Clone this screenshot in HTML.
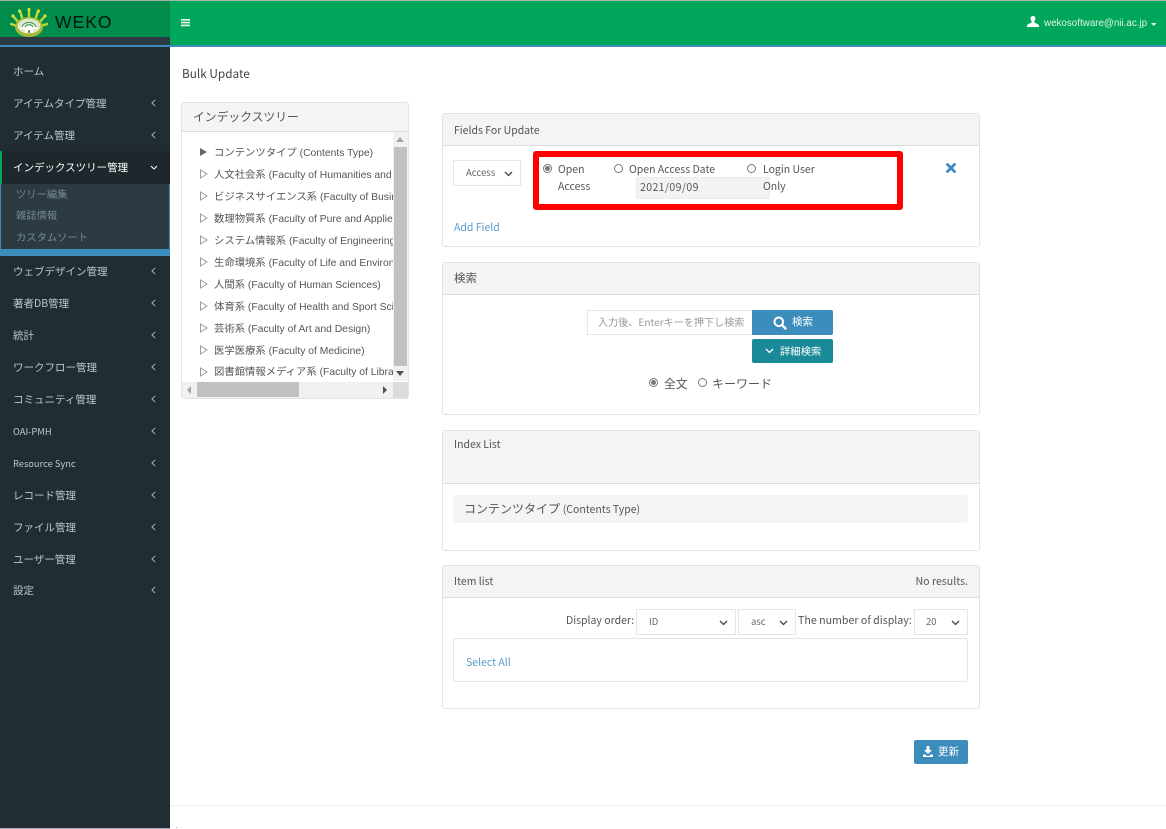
<!DOCTYPE html>
<html lang="ja"><head><meta charset="utf-8"><title>Bulk Update</title>
<style>
*{box-sizing:border-box}
html,body{margin:0;padding:0;width:1166px;height:829px;overflow:hidden;background:#fff}
body{position:relative;font-family:"Noto Sans CJK JP","Liberation Sans",sans-serif;font-size:11px;color:#444}
.a{position:absolute;white-space:nowrap;line-height:1}
.box{position:absolute;background:#fff;border:1px solid #e3e3e3;border-radius:3px;overflow:hidden}
.head{position:absolute;left:0;right:0;top:0;background:#f4f4f4;border-bottom:1px solid #ddd}
.nav{position:absolute;left:13px;color:#b8c7ce;font-size:10.5px;line-height:1;white-space:nowrap}
.chev{position:absolute;left:151px;width:5px;height:8px}
.sub{position:absolute;left:16px;color:#75888f;font-size:10.3px;line-height:1;white-space:nowrap}
.t{position:absolute;left:214px;font-family:"Liberation Sans","Noto Sans CJK JP",sans-serif;font-size:10.35px;color:#555;line-height:1;white-space:nowrap}
.tri{position:absolute;left:199px;width:9px;height:10px}
.sel{position:absolute;background:#fff;border:1px solid #e4e6ea;height:26px;color:#666;font-size:9.500px}
.sel svg{position:absolute;top:10px;right:7px}
.sel span{position:absolute;top:7px;line-height:1}
.radio{position:absolute;width:9px;height:9px;border:1px solid #777;border-radius:50%;background:#fff}
.radio.on:after{content:"";position:absolute;left:1px;top:1px;width:5px;height:5px;background:#777;border-radius:50%}
.l{font-size:10.500px;color:#555}
</style></head><body>

<!-- header -->
<div style="position:absolute;left:0;top:0;width:1166px;height:2px;background:#a9b4ad"></div>
<div style="position:absolute;left:170px;top:1px;width:996px;height:45px;background:#00a65a"></div>
<div style="position:absolute;left:0;top:1px;width:170px;height:36px;background:#008d4c"></div>
<div style="position:absolute;left:0;top:37px;width:170px;height:9px;background:#2c3b41"></div>
<div style="position:absolute;left:0;top:45px;width:1166px;height:2px;background:#3c8dbc"></div>
<div style="position:absolute;left:0;top:47px;width:170px;height:781px;background:#222d32"></div>

<!-- logo -->
<svg style="position:absolute;left:10px;top:7px" width="38" height="30" viewBox="0 0 38 30">
<g stroke="#c3d92e" stroke-width="2.4" stroke-linecap="round">
<path d="M19 13V3M13 14L10 4M25 14L28 4M9 16L3 9M29 16L35 9M7 19L1 17M31 19L37 17"/></g>
<g fill="#d2e23c"><circle cx="19" cy="2.5" r="1.6"/><circle cx="9.5" cy="4" r="1.6"/><circle cx="28.5" cy="4" r="1.6"/><circle cx="3" cy="9" r="1.6"/><circle cx="35" cy="9" r="1.6"/></g>
<ellipse cx="19" cy="20" rx="14" ry="10" fill="#a8b83a"/>
<ellipse cx="19" cy="19" rx="11.5" ry="7.5" fill="#dcecc8"/>
<path d="M10 22C12 14 26 14 28 22Z" fill="#fff"/>
<path d="M12 20C14 14 24 14 26 20M15 20C16 17 22 17 23 20" fill="none" stroke="#4a9a5a" stroke-width="1.2"/>
<path d="M15 26v-4h8v4z" fill="#fff"/><path d="M18 26v-3h2v3z" fill="#6a9a3a"/>
</svg>
<div class="a" style="left:55px;top:14px;font-family:'Liberation Sans',sans-serif;font-size:17.500px;letter-spacing:1px;color:#03150f">WEKO</div>

<!-- hamburger -->
<svg style="position:absolute;left:181px;top:18px" width="10" height="9"><path d="M0 1h9v1.6H0zM0 3.8h9v1.6H0zM0 6.6h9v1.6H0z" fill="#e8f6ee"/></svg>

<!-- user -->
<svg style="position:absolute;left:1027px;top:16px" width="12" height="11" viewBox="0 0 12 11"><path d="M6 0C4.2 0 3.4 1.3 3.6 3c.1 1.1.6 2 1.1 2.5v1L1 8.2C.4 8.5 0 9 0 9.600V11h12V9.600c0-.6-.4-1.100-1-1.400L7.300 6.500v-1C7.800 5 8.300 4.100 8.400 3 8.600 1.300 7.800 0 6 0z" fill="#fff"/></svg>
<div class="a" style="left:1044px;top:19px;font-family:'Liberation Sans',sans-serif;font-size:9.800px;color:#e2f5ea">wekosoftware@nii.ac.jp</div>
<svg style="position:absolute;left:1151px;top:23px" width="6" height="3"><path d="M0 0h5.500L2.750 3z" fill="#e2f5ea"/></svg>

<!-- sidebar -->
<div class="nav" style="top:67px">ホーム</div>
<div class="nav" style="top:99px">アイテムタイプ管理</div>
<div class="nav" style="top:131px">アイテム管理</div>
<div style="position:absolute;left:0;top:151px;width:170px;height:33px;background:#1e282c"></div>
<div style="position:absolute;left:0;top:151px;width:2px;height:33px;background:#00a65a"></div>
<div class="nav" style="top:163px;color:#fff">インデックスツリー管理</div>
<div style="position:absolute;left:0;top:184px;width:170px;height:65px;background:#2c3b41;border-left:1px solid #3c8dbc;border-right:1px solid #3c8dbc"></div>
<div style="position:absolute;left:0;top:249px;width:170px;height:7px;background:#3c8dbc"></div>
<div class="sub" style="top:189px">ツリー編集</div>
<div class="sub" style="top:210px">雑誌情報</div>
<div class="sub" style="top:232px">カスタムソート</div>
<div class="nav" style="top:267px">ウェブデザイン管理</div>
<div class="nav" style="top:299px">著者DB管理</div>
<div class="nav" style="top:331px">統計</div>
<div class="nav" style="top:363px">ワークフロー管理</div>
<div class="nav" style="top:395px">コミュニティ管理</div>
<div class="nav" style="top:427px;font-size:9.300px">OAI-PMH</div>
<div class="nav" style="top:459px;font-size:9.300px">Resource Sync</div>
<div class="nav" style="top:491px">レコード管理</div>
<div class="nav" style="top:523px">ファイル管理</div>
<div class="nav" style="top:555px">ユーザー管理</div>
<div class="nav" style="top:586px">設定</div>

<svg class="chev" style="top:99px" viewBox="0 0 5 8"><path d="M4 1L1 4l3 3" fill="none" stroke="#9fb0b7" stroke-width="1"/></svg>
<svg class="chev" style="top:131px" viewBox="0 0 5 8"><path d="M4 1L1 4l3 3" fill="none" stroke="#9fb0b7" stroke-width="1"/></svg>
<svg style="position:absolute;left:150px;top:165px" width="8" height="5"><path d="M1 1l3 3 3-3" fill="none" stroke="#fff" stroke-width="1"/></svg>
<svg class="chev" style="top:267px" viewBox="0 0 5 8"><path d="M4 1L1 4l3 3" fill="none" stroke="#9fb0b7" stroke-width="1"/></svg>
<svg class="chev" style="top:299px" viewBox="0 0 5 8"><path d="M4 1L1 4l3 3" fill="none" stroke="#9fb0b7" stroke-width="1"/></svg>
<svg class="chev" style="top:331px" viewBox="0 0 5 8"><path d="M4 1L1 4l3 3" fill="none" stroke="#9fb0b7" stroke-width="1"/></svg>
<svg class="chev" style="top:363px" viewBox="0 0 5 8"><path d="M4 1L1 4l3 3" fill="none" stroke="#9fb0b7" stroke-width="1"/></svg>
<svg class="chev" style="top:395px" viewBox="0 0 5 8"><path d="M4 1L1 4l3 3" fill="none" stroke="#9fb0b7" stroke-width="1"/></svg>
<svg class="chev" style="top:427px" viewBox="0 0 5 8"><path d="M4 1L1 4l3 3" fill="none" stroke="#9fb0b7" stroke-width="1"/></svg>
<svg class="chev" style="top:459px" viewBox="0 0 5 8"><path d="M4 1L1 4l3 3" fill="none" stroke="#9fb0b7" stroke-width="1"/></svg>
<svg class="chev" style="top:491px" viewBox="0 0 5 8"><path d="M4 1L1 4l3 3" fill="none" stroke="#9fb0b7" stroke-width="1"/></svg>
<svg class="chev" style="top:523px" viewBox="0 0 5 8"><path d="M4 1L1 4l3 3" fill="none" stroke="#9fb0b7" stroke-width="1"/></svg>
<svg class="chev" style="top:555px" viewBox="0 0 5 8"><path d="M4 1L1 4l3 3" fill="none" stroke="#9fb0b7" stroke-width="1"/></svg>
<svg class="chev" style="top:586px" viewBox="0 0 5 8"><path d="M4 1L1 4l3 3" fill="none" stroke="#9fb0b7" stroke-width="1"/></svg>

<!-- title -->
<div class="a" style="left:182px;top:68px;font-size:11.800px;color:#444">Bulk Update</div>

<!-- tree panel -->
<div class="box" style="left:181px;top:102px;width:228px;height:297px">
  <div class="head" style="height:29px"></div>
</div>
<div class="a" style="left:193px;top:111px;font-size:11.800px;color:#555">インデックスツリー</div>

<svg class="tri" style="top:147px"><path d="M1 1l7 4-7 4z" fill="#666"/></svg>
<svg class="tri" style="top:169px"><path d="M1.500 1l6.500 4-6.500 4z" fill="#fff" stroke="#999"/></svg>
<svg class="tri" style="top:191px"><path d="M1.500 1l6.500 4-6.500 4z" fill="#fff" stroke="#999"/></svg>
<svg class="tri" style="top:213px"><path d="M1.500 1l6.500 4-6.500 4z" fill="#fff" stroke="#999"/></svg>
<svg class="tri" style="top:235px"><path d="M1.500 1l6.500 4-6.500 4z" fill="#fff" stroke="#999"/></svg>
<svg class="tri" style="top:257px"><path d="M1.500 1l6.500 4-6.500 4z" fill="#fff" stroke="#999"/></svg>
<svg class="tri" style="top:279px"><path d="M1.500 1l6.500 4-6.500 4z" fill="#fff" stroke="#999"/></svg>
<svg class="tri" style="top:301px"><path d="M1.500 1l6.500 4-6.500 4z" fill="#fff" stroke="#999"/></svg>
<svg class="tri" style="top:323px"><path d="M1.500 1l6.500 4-6.500 4z" fill="#fff" stroke="#999"/></svg>
<svg class="tri" style="top:345px"><path d="M1.500 1l6.500 4-6.500 4z" fill="#fff" stroke="#999"/></svg>
<svg class="tri" style="top:367px"><path d="M1.500 1l6.500 4-6.500 4z" fill="#fff" stroke="#999"/></svg>

<div style="position:absolute;left:192px;top:135px;width:201px;height:246px;overflow:hidden">
<div class="t" style="left:22px;top:14px">コンテンツタイプ (Contents Type)</div>
<div class="t" style="left:22px;top:36px">人文社会系 (Faculty of Humanities and Social Sciences)</div>
<div class="t" style="left:22px;top:58px">ビジネスサイエンス系 (Faculty of Business Sciences)</div>
<div class="t" style="left:22px;top:80px">数理物質系 (Faculty of Pure and Applied Sciences)</div>
<div class="t" style="left:22px;top:102px">システム情報系 (Faculty of Engineering)</div>
<div class="t" style="left:22px;top:124px">生命環境系 (Faculty of Life and Environmental Sciences)</div>
<div class="t" style="left:22px;top:146px">人間系 (Faculty of Human Sciences)</div>
<div class="t" style="left:22px;top:168px">体育系 (Faculty of Health and Sport Sciences)</div>
<div class="t" style="left:22px;top:190px">芸術系 (Faculty of Art and Design)</div>
<div class="t" style="left:22px;top:212px">医学医療系 (Faculty of Medicine)</div>
<div class="t" style="left:22px;top:233px">図書館情報メディア系 (Faculty of Library, Information)</div>
</div>

<!-- scrollbars -->
<div style="position:absolute;left:393px;top:132px;width:15px;height:249px;background:#f1f1f1"></div>
<div style="position:absolute;left:394px;top:147px;width:13px;height:219px;background:#c1c1c1"></div>
<svg style="position:absolute;left:396px;top:137px" width="9" height="5"><path d="M0 5h8L4 0z" fill="#a3a3a3"/></svg>
<svg style="position:absolute;left:396px;top:371px" width="9" height="5"><path d="M0 0h8L4 5z" fill="#505050"/></svg>
<div style="position:absolute;left:182px;top:382px;width:211px;height:16px;background:#f1f1f1"></div>
<div style="position:absolute;left:197px;top:382px;width:102px;height:15px;background:#c1c1c1"></div>
<div style="position:absolute;left:393px;top:382px;width:15px;height:16px;background:#dcdcdc"></div>
<svg style="position:absolute;left:187px;top:386px" width="5" height="8"><path d="M4 0v8L0 4z" fill="#a3a3a3"/></svg>
<svg style="position:absolute;left:383px;top:386px" width="5" height="8"><path d="M0 0v8l4-4z" fill="#505050"/></svg>

<!-- Fields For Update -->
<div class="box" style="left:442px;top:113px;width:538px;height:134px"><div class="head" style="height:32px"></div></div>
<div class="a l" style="left:454px;top:126px">Fields For Update</div>
<div class="sel" style="left:453px;top:160px;width:68px"><span style="left:12px">Access</span><svg width="9" height="6"><path d="M1 1l3.500 3.500L8 1" fill="none" stroke="#444" stroke-width="1.300"/></svg></div>
<div style="position:absolute;left:533px;top:151px;width:370px;height:59px;border:6px solid #f00;border-radius:3px;background:#fff"></div>
<div class="radio on" style="left:543px;top:164px"></div>
<div class="a l" style="left:558px;top:165px">Open</div>
<div class="a l" style="left:558px;top:182px">Access</div>
<div class="radio" style="left:614px;top:164px"></div>
<div class="a l" style="left:629px;top:165px">Open Access Date</div>
<div style="position:absolute;left:636px;top:177px;width:134px;height:22px;background:#f3f3f3;border:1px solid #eaeaea;border-radius:2px"></div>
<div class="a" style="left:640px;top:183px;font-size:10.500px;letter-spacing:.4px;color:#555">2021/09/09</div>
<div class="radio" style="left:747px;top:164px"></div>
<div class="a l" style="left:763px;top:165px">Login User</div>
<div class="a l" style="left:763px;top:182px">Only</div>
<svg style="position:absolute;left:946px;top:163px" width="10" height="10" viewBox="0 0 10 10"><path d="M1.500 1.500l7 7M8.500 1.500l-7 7" stroke="#3c8dbc" stroke-width="2.800" stroke-linecap="round"/></svg>
<div class="a l" style="left:454px;top:223px;color:#5a9bc7">Add Field</div>

<!-- search -->
<div class="box" style="left:442px;top:262px;width:538px;height:153px"><div class="head" style="height:32px"></div></div>
<div class="a" style="left:454px;top:273px;font-size:11.500px;color:#555">検索</div>
<div style="position:absolute;left:587px;top:310px;width:166px;height:25px;background:#fff;border:1px solid #e4e6ea"></div>
<div class="a" style="left:598px;top:317px;font-size:10.100px;color:#999">入力後、Enterキーを押下し検索</div>
<div style="position:absolute;left:752px;top:310px;width:81px;height:25px;background:#3c8dbc;border-radius:0 2px 2px 0"></div>
<svg style="position:absolute;left:773px;top:316px" width="14" height="14" viewBox="0 0 14 14"><circle cx="5.800" cy="5.800" r="4.300" fill="none" stroke="#fff" stroke-width="2"/><path d="M9 9l3.500 3.500" stroke="#fff" stroke-width="2.400" stroke-linecap="round"/></svg>
<div class="a" style="left:792px;top:317px;font-size:10.500px;color:#fff">検索</div>
<div style="position:absolute;left:752px;top:339px;width:81px;height:24px;background:#1b8a98;border-radius:2px"></div>
<svg style="position:absolute;left:765px;top:348px" width="9" height="6"><path d="M1 1l3.500 3.500L8 1" fill="none" stroke="#fff" stroke-width="1.300"/></svg>
<div class="a" style="left:780px;top:346px;font-size:10.300px;color:#fff">詳細検索</div>
<div class="radio on" style="left:649px;top:378px"></div>
<div class="a" style="left:664px;top:378px;font-size:11.800px;color:#555">全文</div>
<div class="radio" style="left:698px;top:378px"></div>
<div class="a" style="left:712px;top:378px;font-size:12px;color:#555">キーワード</div>

<!-- index list -->
<div class="box" style="left:442px;top:430px;width:538px;height:121px"><div class="head" style="height:53px"></div></div>
<div class="a l" style="left:454px;top:440px">Index List</div>
<div style="position:absolute;left:453px;top:495px;width:515px;height:28px;background:#f4f4f4;border-radius:3px"></div>
<div class="a" style="left:464px;top:503px;font-size:12px;color:#555">コンテンツタイプ <span style="font-size:10.500px">(Contents Type)</span></div>

<!-- item list -->
<div class="box" style="left:442px;top:565px;width:538px;height:144px"><div class="head" style="height:32px"></div></div>
<div class="a l" style="left:454px;top:577px">Item list</div>
<div class="a" style="right:198px;top:577px;font-size:10.600px;color:#555">No results.</div>
<div class="a l" style="left:566px;top:616px">Display order:</div>
<div class="sel" style="left:636px;top:609px;width:100px"><span style="left:12px">ID</span><svg width="9" height="6"><path d="M1 1l3.500 3.500L8 1" fill="none" stroke="#444" stroke-width="1.300"/></svg></div>
<div class="sel" style="left:738px;top:609px;width:58px"><span style="left:12px">asc</span><svg width="9" height="6"><path d="M1 1l3.500 3.500L8 1" fill="none" stroke="#444" stroke-width="1.300"/></svg></div>
<div class="a" style="left:798px;top:616px;font-size:10.650px;color:#555">The number of display:</div>
<div class="sel" style="left:914px;top:609px;width:54px"><span style="left:11px">20</span><svg width="9" height="6"><path d="M1 1l3.500 3.500L8 1" fill="none" stroke="#444" stroke-width="1.300"/></svg></div>
<div style="position:absolute;left:453px;top:638px;width:515px;height:44px;background:#fff;border:1px solid #e3e3e3;border-radius:3px"></div>
<div class="a l" style="left:466px;top:658px;color:#5a9bc7">Select All</div>

<!-- update -->
<div style="position:absolute;left:914px;top:740px;width:54px;height:24px;background:#3c8dbc;border-radius:2px"></div>
<svg style="position:absolute;left:923px;top:746px" width="10" height="11" viewBox="0 0 10 11"><path d="M3.500 0h3v4H9L5 8 1 4h2.500zM0 8.500h2.500L4 10h2l1.500-1.500H10V11H0z" fill="#fff"/></svg>
<div class="a" style="left:938px;top:747px;font-size:10.500px;color:#fff">更新</div>

<!-- footer -->
<div style="position:absolute;left:170px;top:805px;width:996px;height:1px;background:#eee"></div>
<div style="position:absolute;left:0;top:828px;width:170px;height:1px;background:#aab"></div>
<div style="position:absolute;left:176px;top:827px;width:1px;height:1px;background:#8aa6d8"></div>
</body></html>
